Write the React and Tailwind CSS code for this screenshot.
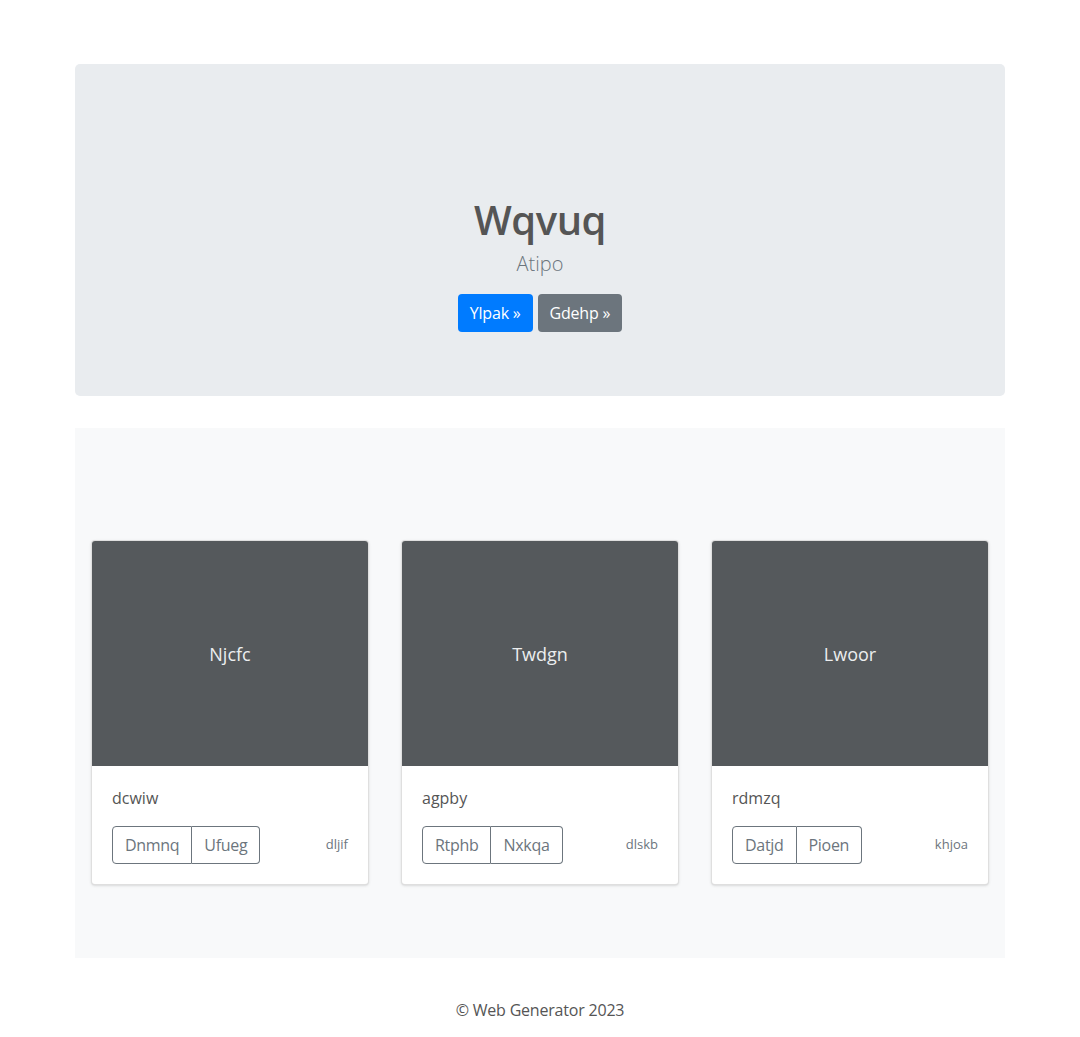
export default function App() {
    const cards = [
        { title: "Njcfc", text: "dcwiw", a: "Dnmnq", b: "Ufueg", note: "dljif" },
        { title: "Twdgn", text: "agpby", a: "Rtphb", b: "Nxkqa", note: "dlskb" },
        { title: "Lwoor", text: "rdmzq", a: "Datjd", b: "Pioen", note: "khjoa" },
    ];

    return (
        <div className="min-h-screen bg-white text-[#212529]" style={{ fontFamily: '"Open Sans", "Noto Sans", sans-serif' }}>
            <div className="w-[930px] mx-auto pt-16">
                {/* Jumbotron */}
                <section className="bg-[#e9ecef] rounded-[5px] pt-[132px] pb-16 text-center">
                    <h1 className="text-[40px] leading-[48px] font-semibold tracking-[-0.5px] text-[#555555]">Wqvuq</h1>
                    <p className="mt-[5px] text-xl leading-[30px] font-light text-[#6c757d]">Atipo</p>
                    <div className="mt-[15px] flex justify-center gap-[5px]">
                        <button className="h-[38px] px-3 rounded-[4px] bg-[#007bff] text-white text-base tracking-[-0.2px]">Ylpak »</button>
                        <button className="h-[38px] px-3 rounded-[4px] bg-[#6c757d] text-white text-base tracking-[-0.2px]">Gdehp »</button>
                    </div>
                </section>

                {/* Cards */}
                <section className="mt-8 bg-[#f8f9fa] px-4 pt-[112px] pb-[73px]">
                    <div className="grid grid-cols-3 gap-8">
                        {cards.map((c) => (
                            <div key={c.title} className="bg-white border border-black/[0.125] rounded-[4px] shadow-sm overflow-hidden">
                                <div className="h-[225px] bg-[#55595c] flex items-center justify-center text-[#eceeef] text-lg">
                                    {c.title}
                                </div>
                                <div className="p-5">
                                    <p className="text-base leading-6 text-[#555555]">{c.text}</p>
                                    <div className="mt-4 flex items-center justify-between">
                                        <div className="flex tracking-[-0.3px]">
                                            <button className="h-[38px] px-3 border border-[#6c757d] rounded-l-[4px] text-[#6c757d] text-base">{c.a}</button>
                                            <button className="h-[38px] px-3 border border-l-0 border-[#6c757d] rounded-r-[4px] text-[#6c757d] text-base">{c.b}</button>
                                        </div>
                                        <small className="text-[13px] text-[#6c757d]">{c.note}</small>
                                    </div>
                                </div>
                            </div>
                        ))}
                    </div>
                </section>
            </div>

            <footer className="py-10 text-center">
                <p className="text-[#555555] text-base tracking-[-0.2px]">© Web Generator 2023</p>
            </footer>
        </div>
    );
}
